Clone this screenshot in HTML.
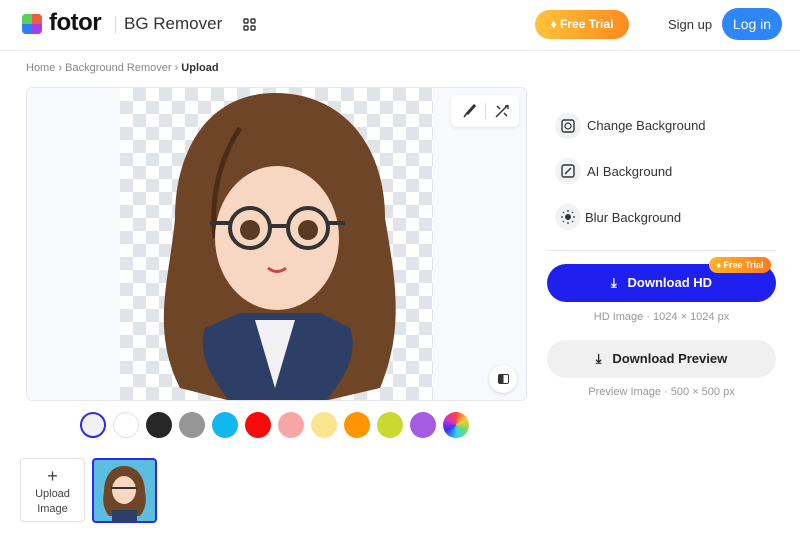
<!DOCTYPE html>
<html><head><meta charset="utf-8"><style>
*{margin:0;padding:0;box-sizing:border-box}
body{width:800px;height:543px;background:#fff;font-family:"Liberation Sans",sans-serif;position:relative;overflow:hidden;color:#222}
.a{position:absolute}
.hdr{left:0;top:0;width:800px;height:51px;border-bottom:1px solid #eceef2}
.t{font-size:13px;color:#333;white-space:nowrap}
.sw{position:absolute;top:412px;width:26px;height:26px;border-radius:50%}
</style></head><body>
<div class="a hdr"></div>
<svg class="a" style="left:22px;top:14px" width="20" height="20" viewBox="0 0 20 20">
<rect width="20" height="20" rx="4" fill="#f4c21c"/>
<path d="M10 10 L10 0 H16 A4 4 0 0 1 20 4 V10Z" fill="#f25a3b"/>
<path d="M10 10 L20 10 V16 A4 4 0 0 1 16 20 H10Z" fill="#a43cf0"/>
<path d="M10 10 L10 20 H4 A4 4 0 0 1 0 16 V10Z" fill="#2f7cf5"/>
<path d="M10 10 L0 10 V4 A4 4 0 0 1 4 0 H10Z" fill="#56d15a"/>
</svg>
<div class="a" style="left:49px;top:9px;font-size:24px;font-weight:bold;color:#111;letter-spacing:-0.5px">fotor</div>
<div class="a" style="left:115px;top:16px;width:1px;height:18px;background:#ddd"></div>
<div class="a" style="left:124px;top:14px;font-size:17px;color:#333">BG Remover</div>
<svg class="a" style="left:243px;top:18px" width="13" height="13" viewBox="0 0 13 13" fill="none" stroke="#333" stroke-width="1.4"><rect x="1" y="1" width="4" height="4" rx="1"/><rect x="8" y="1" width="4" height="4" rx="1"/><rect x="1" y="8" width="4" height="4" rx="1"/><rect x="8" y="8" width="4" height="4" rx="1"/></svg>
<div class="a" style="left:535px;top:10px;width:94px;height:29px;border-radius:15px;background:linear-gradient(90deg,#ffc23a,#ff8a1e);color:#fff;font-size:12px;font-weight:bold;text-align:center;line-height:29px">♦ Free Trial</div>
<div class="a t" style="left:668px;top:17px">Sign up</div>
<div class="a" style="left:722px;top:8px;width:60px;height:32px;border-radius:16px;background:#2f86f6;color:#fff;font-size:14px;text-align:center;line-height:32px">Log in</div>
<div class="a" style="left:26px;top:62px;font-size:11px;color:#888">Home › Background Remover › <b style="color:#333">Upload</b></div>

<div class="a" style="left:26px;top:87px;width:501px;height:314px;border:1px solid #e6e8ec;border-radius:6px;background:#f7f9fc;overflow:hidden">
<div class="a" style="left:93px;top:0;width:313px;height:314px;background-color:#fff;background-image:linear-gradient(45deg,#e0e3e8 25%,transparent 25%,transparent 75%,#e0e3e8 75%),linear-gradient(45deg,#e0e3e8 25%,transparent 25%,transparent 75%,#e0e3e8 75%);background-size:26px 26px;background-position:0 0,13px 13px"></div>
<svg class="a" style="left:93px;top:0" width="313" height="314" viewBox="0 0 313 314">
<path d="M155 5 C90 5 55 60 55 130 C50 190 30 240 60 300 L115 314 L200 314 L260 300 C285 240 275 190 265 130 C265 60 225 5 155 5Z" fill="#6e4526"/>
<path d="M120 40 C100 70 90 110 95 150" stroke="#4a2c17" stroke-width="5" fill="none"/>
<path d="M85 240 C75 270 100 300 110 314 H205 C220 295 240 270 230 240 L200 225 H120Z" fill="#2d3f66"/>
<path d="M135 232 L155 300 L175 232Z" fill="#f2f2f4"/>
<ellipse cx="157" cy="150" rx="62" ry="72" fill="#f7d7c2"/>
<path d="M95 120 C110 70 170 55 225 110 C200 75 150 55 110 75Z" fill="#6e4526"/>
<circle cx="130" cy="140" r="20" fill="none" stroke="#333" stroke-width="4"/>
<circle cx="188" cy="140" r="20" fill="none" stroke="#333" stroke-width="4"/>
<path d="M150 138 H168 M110 135 H90 M208 135 H225" stroke="#333" stroke-width="4"/>
<circle cx="130" cy="142" r="10" fill="#5b3a24"/><circle cx="188" cy="142" r="10" fill="#5b3a24"/>
<path d="M148 180 Q157 187 166 180" stroke="#c24b4b" stroke-width="3" fill="none"/>
</svg>
<div class="a" style="left:424px;top:7px;width:68px;height:32px;background:#fff;border-radius:6px;box-shadow:0 1px 3px rgba(0,0,0,.1)">
<svg class="a" style="left:10px;top:8px" width="16" height="16" viewBox="0 0 16 16"><path d="M3 14 L6 10 M6 10 L13 2 L14 3 L7 11Z" stroke="#333" stroke-width="1.6" fill="#333"/></svg>
<div class="a" style="left:34px;top:8px;width:1px;height:16px;background:#ddd"></div>
<svg class="a" style="left:43px;top:8px" width="16" height="16" viewBox="0 0 16 16" fill="none" stroke="#333" stroke-width="1.5"><path d="M2 14 L14 2 M3 3 L6 6 M10 10 L13 13 M11 3 h3 v3"/></svg>
</div>
<div class="a" style="left:462px;top:277px;width:28px;height:28px;border-radius:50%;background:#fff;box-shadow:0 1px 3px rgba(0,0,0,.15)"><div class="a" style="left:9px;top:9px;width:11px;height:10px;border:1.5px solid #333;border-radius:2px;background:linear-gradient(90deg,#333 50%,transparent 50%)"></div></div>
</div>

<div class="sw" style="left:80px;border:2px solid #2b2bf0;background:#f0f1f4"></div>
<div class="sw" style="left:113px;border:1px solid #e3e3e3;background:#fff"></div>
<div class="sw" style="left:146px;background:#272727"></div>
<div class="sw" style="left:179px;background:#969696"></div>
<div class="sw" style="left:212px;background:#12b7f0"></div>
<div class="sw" style="left:245px;background:#f70a0a"></div>
<div class="sw" style="left:278px;background:#f7a6a8"></div>
<div class="sw" style="left:311px;background:#fbe68f"></div>
<div class="sw" style="left:344px;background:#ff9502"></div>
<div class="sw" style="left:377px;background:#c9d930"></div>
<div class="sw" style="left:410px;background:#a55be3"></div>
<div class="sw" style="left:443px;background:conic-gradient(#f44,#fc3,#6d6,#3cf,#33f,#c3c,#f44)"></div>

<div class="a" style="left:20px;top:458px;width:65px;height:64px;border:1px solid #e2e2e2;border-radius:4px;text-align:center;font-size:11px;color:#444;line-height:15px;padding-top:9px"><span style="font-size:18px;line-height:16px">+</span><br>Upload<br>Image</div>
<div class="a" style="left:92px;top:458px;width:65px;height:65px;border:2px solid #2b2bf0;border-radius:4px;background:#5bbde0;overflow:hidden">
<svg width="61" height="61" viewBox="0 0 61 61"><path d="M30 6 C15 6 10 20 10 32 C8 42 10 50 15 56 H46 C51 50 53 42 51 32 C51 20 45 6 30 6Z" fill="#6e4526"/><path d="M18 50 H43 V61 H18Z" fill="#2d3f66"/><ellipse cx="30" cy="30" rx="12" ry="14" fill="#f7d7c2"/><path d="M17 28 H43" stroke="#333" stroke-width="2"/></svg>
</div>

<svg class="a" style="left:555px;top:113px" width="26" height="120">
<circle cx="13" cy="13" r="13" fill="#f1f2f4"/><circle cx="13" cy="58" r="13" fill="#f1f2f4"/><circle cx="13" cy="104" r="13" fill="#f1f2f4"/>
<rect x="7" y="7" width="12" height="12" rx="2" fill="none" stroke="#333" stroke-width="1.4"/><circle cx="13" cy="13" r="3" fill="none" stroke="#333" stroke-width="1.2"/>
<rect x="7" y="52" width="12" height="12" rx="2" fill="none" stroke="#333" stroke-width="1.4"/><path d="M10 61 L16 55" stroke="#333" stroke-width="1.4"/>
<circle cx="13" cy="104" r="3" fill="#333"/><path d="M13 97v2M13 109v2M6 104h2M18 104h2M8 99l1 1M17 108l1 1M8 109l1-1M17 100l1-1" stroke="#333" stroke-width="1.2"/>
</svg>
<div class="a t" style="left:587px;top:118px">Change Background</div>
<div class="a t" style="left:587px;top:164px">AI Background</div>
<div class="a t" style="left:585px;top:210px">Blur Background</div>
<div class="a" style="left:547px;top:250px;width:229px;height:1px;background:#e4e4e4"></div>
<div class="a" style="left:547px;top:264px;width:229px;height:38px;border-radius:19px;background:#1f1ff0;color:#fff;font-size:13px;font-weight:bold;text-align:center;line-height:38px">⤓&nbsp;&nbsp; Download HD</div>
<div class="a" style="left:709px;top:257px;width:62px;height:16px;border-radius:8px;background:linear-gradient(90deg,#ffb52a,#ff7a1a);color:#fff;font-size:9px;font-weight:bold;text-align:center;line-height:16px">♦ Free Trial</div>
<div class="a" style="left:547px;top:311px;width:229px;text-align:center;font-size:11px;color:#999">HD Image · 1024 × 1024 px</div>
<div class="a" style="left:547px;top:340px;width:229px;height:38px;border-radius:19px;background:#f0f0f0;color:#222;font-size:13px;font-weight:bold;text-align:center;line-height:38px">⤓&nbsp;&nbsp; Download Preview</div>
<div class="a" style="left:547px;top:386px;width:229px;text-align:center;font-size:11px;color:#999">Preview Image · 500 × 500 px</div>
</body></html>
